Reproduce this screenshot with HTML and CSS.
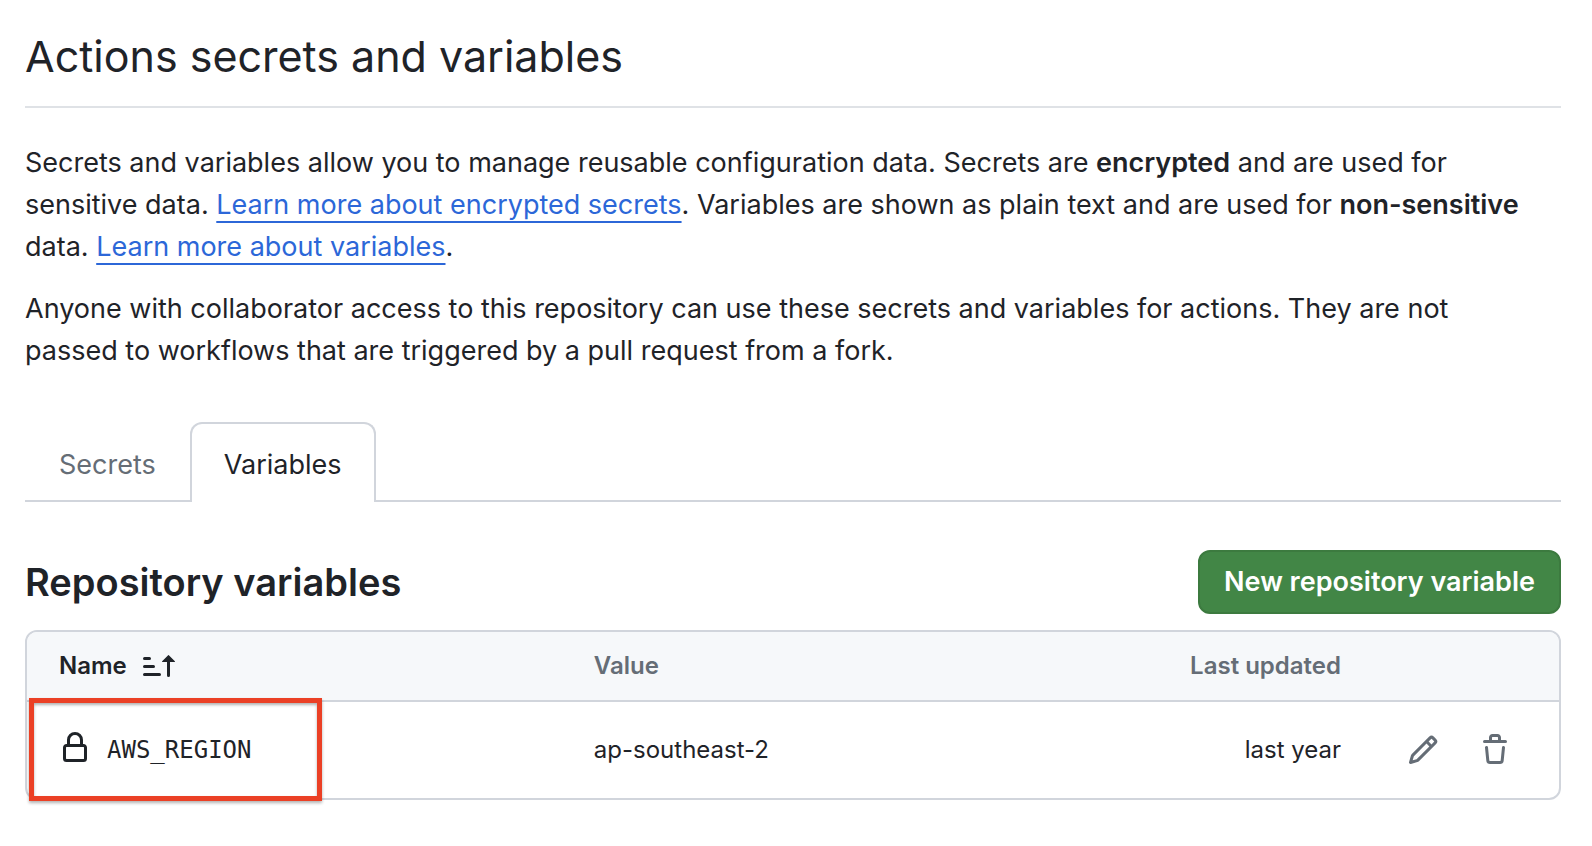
FILE: index.html
```html
<!DOCTYPE html>
<html lang="en">
<head>
<meta charset="utf-8">
<title>Actions secrets and variables</title>
<link rel="stylesheet" href="styles.css">
</head>
<body>
<main class="page">
  <h1 class="page-title">Actions secrets and variables</h1>
  <p class="intro">Secrets and variables allow you to manage reusable configuration data. Secrets are <strong>encrypted</strong> and are used for sensitive data. <a class="link" href="#encrypted-secrets">Learn more about encrypted secrets</a>. Variables are shown as plain text and are used for <strong>non-sensitive</strong> data. <a class="link" href="#variables">Learn more about variables</a>.</p>
  <p class="intro">Anyone with collaborator access to this repository can use these secrets and variables for actions. They are not passed to workflows that are triggered by a pull request from a fork.</p>

  <nav class="tabs" aria-label="Secrets and variables">
    <a class="tab" href="#secrets">Secrets</a>
    <a class="tab tab-selected" href="#variables" aria-current="page">Variables</a>
  </nav>

  <section>
    <div class="section-header">
      <h2 class="section-title">Repository variables</h2>
      <button class="button-primary" type="button">New repository variable</button>
    </div>
    <table class="variables">
      <thead>
        <tr>
          <th class="col-name" scope="col">
            <button class="sort" type="button">Name
              <svg class="icon" viewBox="0 0 16 16" aria-hidden="true"><path d="m12.927 2.573 3 3A.25.25 0 0 1 15.75 6H13.5v6.75a.75.75 0 0 1-1.5 0V6H9.75a.25.25 0 0 1-.177-.427l3-3a.25.25 0 0 1 .354 0Z"/><path class="bars" d="M.75 4.25h2.5M.75 8.25h4.5M.75 12.25h7.5"/></svg>
            </button>
          </th>
          <th class="col-value" scope="col">Value</th>
          <th class="col-updated" scope="col">Last updated</th>
          <th class="col-actions" aria-label="Actions"></th>
        </tr>
      </thead>
      <tbody>
        <tr>
          <td class="col-name highlighted">
            <div class="variable">
              <svg class="icon" viewBox="0 0 16 16" aria-hidden="true"><path d="M4 4a4 4 0 0 1 8 0v2h.25c.966 0 1.75.784 1.75 1.75v5.5A1.75 1.75 0 0 1 12.25 15h-8.5A1.75 1.75 0 0 1 2 13.25v-5.5C2 6.784 2.784 6 3.75 6H4Zm8.25 3.5h-8.5a.25.25 0 0 0-.25.25v5.5c0 .138.112.25.25.25h8.5a.25.25 0 0 0 .25-.25v-5.5a.25.25 0 0 0-.25-.25ZM10.5 6V4a2.5 2.5 0 1 0-5 0v2Z"/></svg>
              <code class="variable-name">AWS_REGION</code>
            </div>
          </td>
          <td class="col-value">ap-southeast-2</td>
          <td class="col-updated">last year</td>
          <td class="col-actions">
            <div class="actions">
              <button class="icon-button" type="button" aria-label="Edit AWS_REGION"><svg class="icon" viewBox="0 0 16 16" aria-hidden="true"><path d="M11.013 1.427a1.75 1.75 0 0 1 2.474 0l1.086 1.086a1.75 1.75 0 0 1 0 2.474l-8.61 8.61c-.21.21-.47.364-.756.445l-3.251.93a.75.75 0 0 1-.927-.928l.929-3.25c.081-.286.235-.547.445-.758l8.61-8.61Zm.176 4.823L9.75 4.81l-6.286 6.287a.253.253 0 0 0-.064.108l-.558 1.953 1.953-.558a.253.253 0 0 0 .108-.064Zm1.238-3.763a.25.25 0 0 0-.354 0L10.811 3.75l1.439 1.44 1.263-1.263a.25.25 0 0 0 0-.354Z"/></svg></button>
              <button class="icon-button" type="button" aria-label="Delete AWS_REGION"><svg class="icon" viewBox="0 0 16 16" aria-hidden="true"><path d="M11 1.75V3h2.25a.75.75 0 0 1 0 1.5H2.75a.75.75 0 0 1 0-1.5H5V1.75C5 .784 5.784 0 6.75 0h2.5C10.216 0 11 .784 11 1.75ZM4.496 6.675l.66 6.6a.25.25 0 0 0 .249.225h5.19a.25.25 0 0 0 .249-.225l.66-6.6a.75.75 0 0 1 1.492.149l-.66 6.6A1.748 1.748 0 0 1 10.595 15h-5.19a1.75 1.75 0 0 1-1.741-1.575l-.66-6.6a.75.75 0 1 1 1.492-.15ZM6.5 1.75V3h3V1.75a.25.25 0 0 0-.25-.25h-2.5a.25.25 0 0 0-.25.25Z"/></svg></button>
            </div>
          </td>
        </tr>
      </tbody>
    </table>
  </section>
</main>
</body>
</html>
```

FILE: styles.css
```css
* {
  box-sizing: border-box;
}

body {
  margin: 0;
  background: #fff;
  color: #1f2328;
  font-family: Inter, "Liberation Sans", sans-serif;
  font-size: 27px;
  line-height: 42px;
}

button {
  font: inherit;
  cursor: pointer;
}

.page {
  padding: 20px 31px 40px 25px;
}

.page-title {
  margin: 0 0 34px;
  padding-bottom: 14px;
  border-bottom: 2px solid #dfe2e6;
  font-size: 43px;
  font-weight: 400;
  line-height: 72px;
}

.intro {
  margin: 0 0 20px;
  padding-right: 20px;
}

.intro strong {
  font-weight: 600;
}

.link {
  color: #2c67d8;
  text-decoration: underline;
  text-decoration-thickness: 2px;
  text-underline-offset: 7px;
  text-decoration-skip-ink: none;
}

.tabs {
  display: flex;
  margin-top: 50px;
  border-bottom: 2px solid #d1d5dc;
}

.tab {
  margin-bottom: -2px;
  padding: 20px 32px 16px;
  border: 2px solid transparent;
  border-bottom: 0;
  color: #656d76;
  text-decoration: none;
}

.tab-selected {
  border-color: #d1d5dc;
  border-radius: 12px 12px 0 0;
  background: #fff;
  color: #1f2328;
}

.section-header {
  display: flex;
  align-items: center;
  justify-content: space-between;
  margin: 48px 0 16px;
}

.section-title {
  margin: 0;
  font-size: 38px;
  font-weight: 600;
  line-height: 60px;
}

.button-primary {
  padding: 9px 24px;
  border: 2px solid #3c7a3f;
  border-radius: 12px;
  background: #428646;
  color: #fff;
  font-weight: 600;
}

.variables {
  width: 100%;
  table-layout: fixed;
  border: 2px solid #d1d5dc;
  border-radius: 12px;
  border-collapse: separate;
  border-spacing: 0;
  font-size: 24px;
  line-height: 36px;
}

.variables th {
  padding: 16px 0;
  border-bottom: 2px solid #d1d5dc;
  background: #f6f8fa;
  color: #656d76;
  font-weight: 600;
  text-align: left;
}

.variables th:first-child {
  border-top-left-radius: 10px;
}

.variables th:last-child {
  border-top-right-radius: 10px;
}

.variables td {
  padding: 30px 0;
}

.variables .col-name {
  width: 37%;
  padding-left: 32px;
}

.variables .col-updated {
  text-align: right;
}

.variables .col-actions {
  width: 218px;
  padding-right: 40px;
}

.icon {
  display: block;
  flex: none;
  width: 32px;
  height: 32px;
  fill: currentColor;
}

.bars {
  fill: none;
  stroke: currentColor;
  stroke-width: 1.5;
  stroke-linecap: round;
}

.sort {
  display: flex;
  align-items: center;
  gap: 16px;
  padding: 0;
  border: 0;
  background: none;
  color: #1f2328;
}

.variable {
  display: flex;
  align-items: flex-start;
  gap: 16px;
}

.variable-name {
  font-family: "DejaVu Sans Mono", "Liberation Mono", monospace;
  font-size: 24px;
}

/* Callout frame drawn over the row edges */
.highlighted {
  position: relative;
}

.highlighted::after {
  content: "";
  position: absolute;
  inset: -4px auto -3px 2px;
  box-sizing: border-box;
  width: 293px;
  border: 5px solid #eb4025;
  box-shadow: 0 2px 3px rgba(0, 0, 0, 0.3), inset 0 2px 3px rgba(0, 0, 0, 0.3);
  pointer-events: none;
}

.actions {
  display: flex;
  justify-content: flex-end;
  gap: 24px;
}

.icon-button {
  padding: 2px 8px;
  border: 0;
  background: none;
  color: #656d76;
}
```
